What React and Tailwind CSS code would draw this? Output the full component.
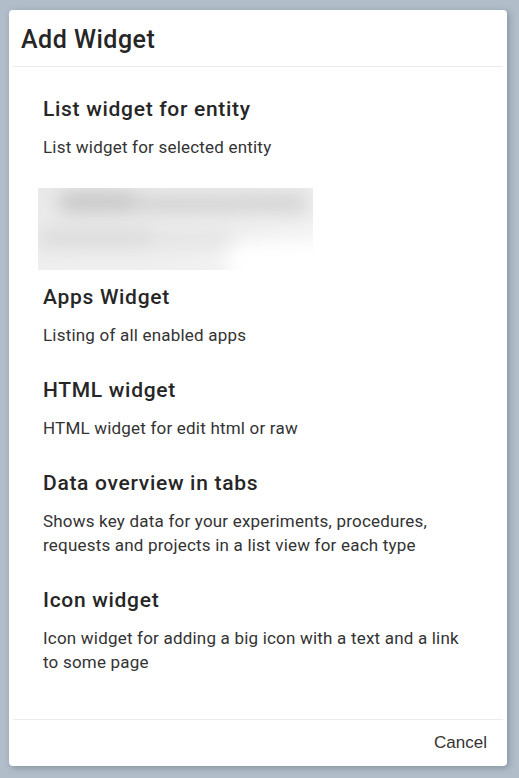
import React from "react";

const widgets = [
  {
    title: "List widget for entity",
    description: "List widget for selected entity",
  },
  {
    title: "Apps Widget",
    description: "Listing of all enabled apps",
    preview: true,
  },
  {
    title: "HTML widget",
    description: "HTML widget for edit html or raw",
  },
  {
    title: "Data overview in tabs",
    description:
      "Shows key data for your experiments, procedures, requests and projects in a list view for each type",
  },
  {
    title: "Icon widget",
    description:
      "Icon widget for adding a big icon with a text and a link to some page",
  },
];

// blurry screenshot placeholder, drawn as a picture
const PreviewImage = () => (
  <svg width="275" height="82" viewBox="0 0 275 82" className="-ml-[5px] mb-[13px] block">
    <defs>
      <filter id="soft" x="-20%" y="-50%" width="140%" height="200%">
        <feGaussianBlur stdDeviation="9" />
      </filter>
      <linearGradient id="fade" x1="0" y1="0" x2="1" y2="1">
        <stop offset="0" stopColor="#e9e9e9" />
        <stop offset="0.65" stopColor="#efefef" />
        <stop offset="1" stopColor="#fcfcfc" />
      </linearGradient>
    </defs>
    <rect width="275" height="82" fill="url(#fade)" />
    <g filter="url(#soft)">
      <rect x="20" y="4" width="80" height="20" rx="9" fill="#c6c6c6" />
      <rect x="95" y="8" width="120" height="16" rx="8" fill="#d0d0d0" />
      <rect x="205" y="6" width="65" height="18" rx="8" fill="#d2d2d2" />
      <rect x="0" y="40" width="120" height="20" rx="9" fill="#dcdcdc" />
      <rect x="110" y="44" width="90" height="14" rx="7" fill="#e2e2e2" />
      <rect x="190" y="55" width="110" height="40" fill="#ffffff" />
      <rect x="0" y="72" width="190" height="20" fill="#efefef" />
    </g>
  </svg>
);

export default function App() {
  return (
    <div className="h-screen w-screen bg-[#b1bdc9] pl-[9px] pt-[10px] pr-[12px] pb-[12px] font-['Roboto',sans-serif]">
      <div className="flex h-[756px] w-[498px] flex-col rounded-sm bg-white shadow-[2px_2px_6px_rgba(60,70,85,0.35)]">
        <div className="flex h-[56px] items-center px-3 pt-[4px]">
          <h1 className="text-[25px] font-medium tracking-[0.5px] text-[#262626]">Add Widget</h1>
        </div>
        <div className="mx-1 border-b border-[#ececec]" />

        <div className="flex-1 overflow-hidden pl-[34px] pr-[38px] pt-[28px]">
          <div className="flex flex-col gap-[29px]">
            {widgets.map((w) => (
              <div key={w.title} className="cursor-pointer">
                {w.preview && <PreviewImage />}
                <h2 className="text-[21px] leading-[28px] font-medium tracking-[0.7px] text-[#262626]">
                  {w.title}
                </h2>
                <p className="mt-3 text-[17px] leading-[24px] tracking-[0.2px] text-[#333]">
                  {w.description}
                </p>
              </div>
            ))}
          </div>
        </div>

        <div className="mx-1 border-b border-[#ececec]" />
        <div className="flex h-[46px] items-center justify-end pr-5">
          <button className="font-['Liberation_Sans',Arial,sans-serif] text-[17px] text-[#333]">
            Cancel
          </button>
        </div>
      </div>
    </div>
  );
}
